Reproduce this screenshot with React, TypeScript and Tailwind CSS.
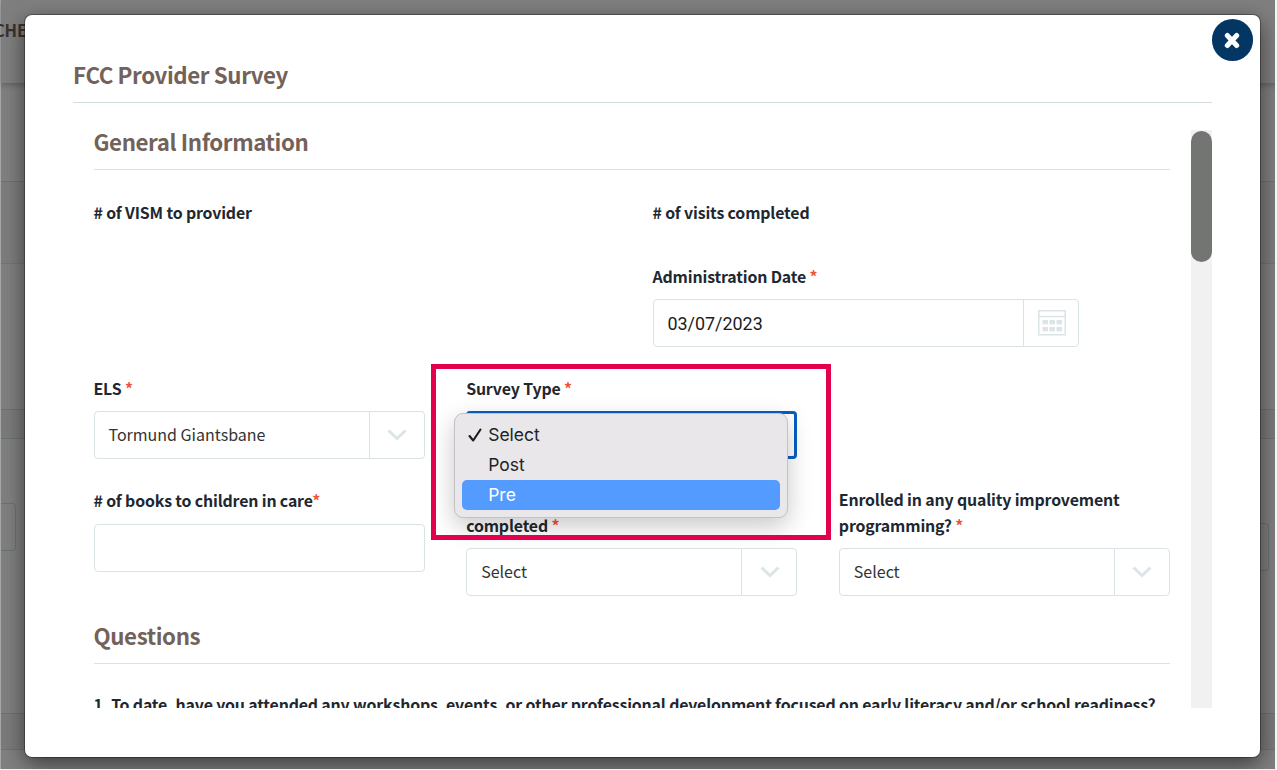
import React from "react";

type FieldProps = {
  label: React.ReactNode;
  required?: boolean;
  className?: string;
  children?: React.ReactNode;
};

function Asterisk() {
  return <span className="text-[#f0533d]">*</span>;
}

function Label({ children }: { children: React.ReactNode }) {
  return (
    <div className="text-[15.9px] leading-[26px] font-semibold tracking-[-0.16px] text-[#212730]">{children}</div>
  );
}

function Field({ label, required, className = "", children }: FieldProps) {
  return (
    <div className={`flex flex-col gap-[9px] ${className}`}>
      <Label>
        {label}
        {required && <> <Asterisk /></>}
      </Label>
      {children}
    </div>
  );
}

function Select({ value, focused }: { value: string; focused?: boolean }) {
  return (
    <div
      className={`flex h-12 rounded bg-white ${
        focused ? "border-[3px] border-[#0a5dc2]" : "border-[1.5px] border-[#d9e3e5]"
      }`}
    >
      <div className="flex flex-1 items-center pb-0.5 pl-3.5 text-base text-[#333]">{value}</div>
      {!focused && (
        <div className="flex w-[55px] items-center justify-center border-l-[1.5px] border-[#d9e3e5] pl-px">
          <svg width="20" height="12" viewBox="0 0 20 12" fill="none" stroke="#dbe4e6" strokeWidth="3">
            <path d="M1.5 1.5 L10 9.5 L18.5 1.5" />
          </svg>
        </div>
      )}
    </div>
  );
}

function SectionTitle({ children }: { children: React.ReactNode }) {
  return (
    <h2 className="border-b-[1.5px] border-[#d9e3e5] pb-[17px] text-[22.3px] leading-[22px] font-semibold tracking-[-0.4px] text-[#73625a]">
      {children}
    </h2>
  );
}

function CalendarIcon() {
  return (
    <svg width="28" height="26" viewBox="0 0 28 26" fill="none">
      <rect x="0.75" y="0.75" width="26.5" height="24" stroke="#dbe4e6" strokeWidth="1.5" />
      <path d="M1 6.5 H27" stroke="#dbe4e6" strokeWidth="1.5" />
      {[4.5, 11.5, 18.5].map((x) => (
        <React.Fragment key={x}>
          <rect x={x} y="10" width="5.5" height="4.3" fill="#dbe4e6" />
          <rect x={x} y="17" width="5.5" height="4.3" fill="#dbe4e6" />
        </React.Fragment>
      ))}
    </svg>
  );
}

function OptionsMenu() {
  return (
    <div className="absolute top-[37px] left-[-12px] z-10 h-[105px] w-[334px] rounded-[9px] border border-[#c3c1c3] bg-[#eae7ea] px-[7px] pt-[6px] font-[Inter,sans-serif] text-[17.5px] text-[#242324] shadow-[0_8px_24px_rgba(0,0,0,0.22)]">
      <div className="flex h-[30px] items-center">
        <svg className="ml-[6px] mr-[6px]" width="14" height="15" viewBox="0 0 14 15" fill="none" stroke="#1d1d1d" strokeWidth="2.1" strokeLinecap="round" strokeLinejoin="round">
          <path d="M1.5 8 L5.2 12.5 L12.5 1.5" />
        </svg>
        Select
      </div>
      <div className="flex h-[30px] items-center pt-px pl-[26px]">Post</div>
      <div className="flex h-[30px] items-center rounded-[5px] bg-[#549bff] pt-px pl-[26px] text-white">Pre</div>
    </div>
  );
}

// The dimmed page that sits behind the dialog
function Backdrop() {
  return (
    <div className="absolute inset-0 flex flex-col border-l border-[#a6a9a9] bg-[#808080]">
      <div className="relative h-[83px] shrink-0 bg-[#7f7f7f] pt-[18px] text-[16.5px] leading-6 font-bold text-[#39312d] shadow-[0_2px_6px_rgba(0,0,0,0.25)]">
        <div className="-ml-[7px] tracking-[-0.2px]">CHE</div>
      </div>
      <div className="h-[99px] border-b border-[#6b7272]" />
      <div className="h-[82px] border-b border-[#737676] bg-[#7d7d7d]" />
      <div className="h-[146px] border-b border-[#6d7272]" />
      <div className="h-[29px] border-b border-[#6b7272] bg-[#7b7b7b]" />
      <div className="flex h-[275px] items-start justify-between border-b border-[#6b7272]">
        <div className="mt-[64px] h-12 w-[15px] rounded-r border border-l-0 border-[#6b7272]" />
        <div className="mt-[84px] mr-[8px] h-12 w-[15px] rounded-r border border-l-0 border-[#6b7272]" />
      </div>
      <div className="h-9 border-b border-[#6d7272] bg-[#7b7b7b]" />
    </div>
  );
}

export default function App() {
  return (
    <div className="relative h-[770px] w-[1277px] overflow-hidden bg-white font-['Noto_Sans_CJK_SC',sans-serif]">
      <Backdrop />

      {/* Dialog */}
      <div className="relative mt-[15px] ml-[25px] h-[742px] w-[1235px] rounded-[7px] bg-white px-12 pt-[46px] shadow-[0_0_0_1px_rgba(0,0,0,0.3),0_7px_22px_rgba(0,0,0,0.55)]">
        <button className="absolute top-[4px] right-[7px] flex size-[41.5px] items-center justify-center rounded-full bg-[#033663]">
          <svg className="mt-[2px]" width="16" height="17" viewBox="0 0 16 17" stroke="white" strokeWidth="5" strokeLinecap="round">
            <path d="M3.3 3.5 L12.7 13.5 M12.7 3.5 L3.3 13.5" />
          </svg>
        </button>

        <h1 className="h-[42px] border-b border-[#d3dde0] text-[22.3px] leading-[27px] font-semibold tracking-[-0.4px] text-[#73625a]">
          FCC Provider Survey
        </h1>

        <div className="mt-[27px] flex h-[578px] overflow-hidden">
          <div className="relative min-w-0 flex-1 pr-[21px] pl-[20.5px]">
            <SectionTitle>General Information</SectionTitle>

            <div className="mt-[30px] grid grid-cols-[559px_426px]">
              <Label># of VISM to provider</Label>
              <Label># of visits completed</Label>
            </div>

            <div className="mt-[38px] ml-[559px] w-[426px]">
              <Field label="Administration Date" required>
                <div className="flex h-12 rounded border-[1.5px] border-[#d9e3e5]">
                  <div className="flex flex-1 items-center pt-0.5 pl-3.5 font-[Roboto,sans-serif] text-[17.9px] text-[#1c1c1c]">
                    03/07/2023
                  </div>
                  <div className="flex w-[55px] items-center justify-center border-l-[1.5px] border-[#d9e3e5] pl-[3px]">
                    <CalendarIcon />
                  </div>
                </div>
              </Field>
            </div>

            <div className="mt-[29px] grid grid-cols-3 gap-x-[41.5px]">
              <Field label="ELS" required>
                <Select value="Tormund Giantsbane" />
              </Field>
              <Field label="Survey Type" required className="relative">
                <Select value="" focused />
                <OptionsMenu />
              </Field>
            </div>

            <div className="mt-[28px] grid grid-cols-3 gap-x-[41.5px]">
              <div className="flex flex-col gap-2.5 pt-px">
                <Label># of books to children in care<Asterisk /></Label>
                <div className="h-12 rounded border-[1.5px] border-[#d9e3e5]" />
              </div>
              <Field label={<><br />completed</>} required>
                <Select value="Select" />
              </Field>
              <Field label={<>Enrolled in any quality improvement<br />programming?</>} required>
                <Select value="Select" />
              </Field>
            </div>

            <div className="mt-[28px]">
              <SectionTitle>Questions</SectionTitle>
            </div>
            <div className="mt-[28px] whitespace-nowrap">
              <Label>
                1. To date, have you attended any workshops, events, or other professional development focused on
                early literacy and/or school readiness?
              </Label>
            </div>

            {/* Callout around the survey type field */}
            <div className="absolute top-[234px] left-[358px] z-20 h-[176px] w-[400px] border-[5px] border-[#e3004f]" />
          </div>

          <div className="w-[21px] shrink-0 bg-[#f1f1f1]">
            <div className="mt-[0.5px] h-[131px] rounded-full bg-[#737573]" />
          </div>
        </div>
      </div>

      {/* Light strips at the page edges */}
      <div className="absolute inset-y-0 right-0 w-0.5 bg-[#f4f4f4]" />
      <div className="absolute inset-x-0 bottom-0 h-px bg-[#f4f4f4]" />
    </div>
  );
}
